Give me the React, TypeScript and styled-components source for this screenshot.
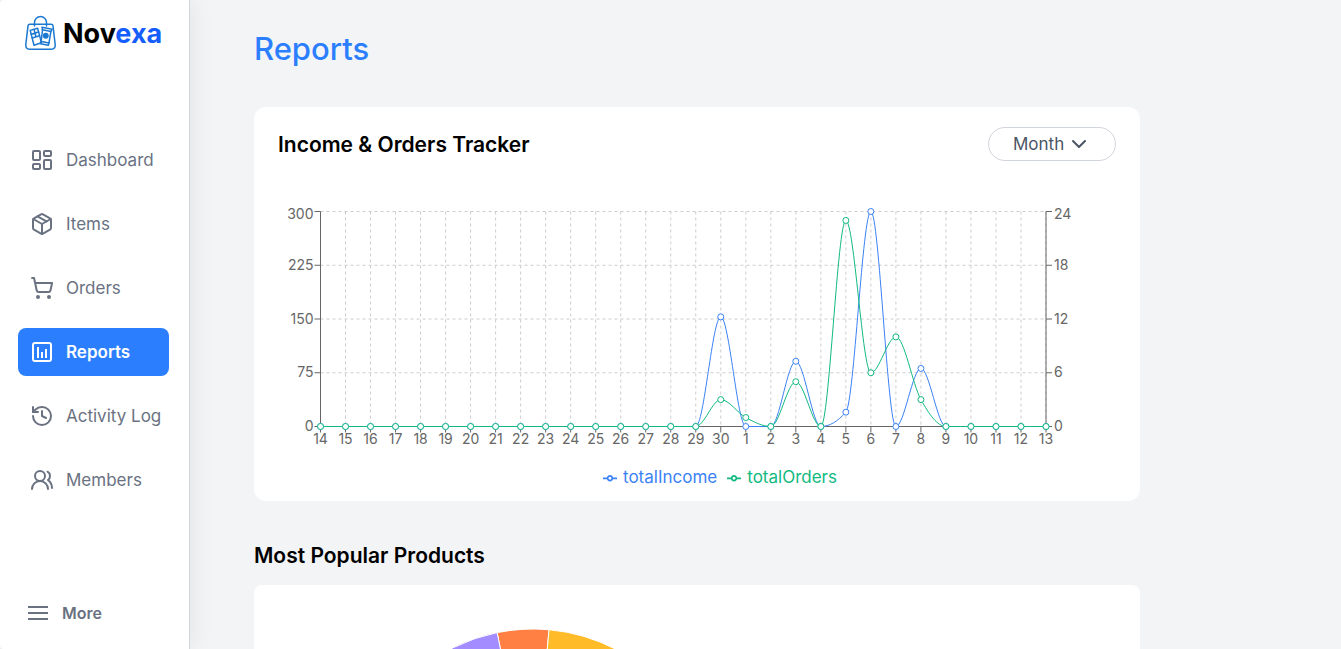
import React from "react";
import styled, { createGlobalStyle, css } from "styled-components";
import {
  LayoutDashboard,
  Package,
  ShoppingCart,
  History,
  UsersRound,
  ChevronDown,
} from "lucide-react";

const GlobalStyle = createGlobalStyle`
  *, *::before, *::after { box-sizing: border-box; }
  body {
    margin: 0;
    background: #f3f4f6;
    color: #000;
    font-family: Inter, "Liberation Sans", sans-serif;
    font-size: 17px;
    line-height: 24px;
  }
  h1, h2, ul { margin: 0; padding: 0; }
  ul { list-style: none; }
`;

const Layout = styled.div`
  display: flex;
  height: 100vh;
  overflow: hidden;
`;

const Sidebar = styled.aside`
  display: flex;
  flex-direction: column;
  flex: 0 0 190px;
  min-width: 0;
  padding: 14px 20px 24px 18px;
  background: #fff;
  border-right: 1px solid #d1d5dc;
  border-radius: 4px 0 0 4px;
  box-shadow: 0 0 24px rgba(0, 0, 0, 0.08);
`;

const Brand = styled.a`
  display: flex;
  align-items: center;
  gap: 5px;
  height: 38px;
  margin-bottom: 84px;
  padding-left: 6px;
  color: #000;
  font-size: 27px;
  font-weight: 700;
  line-height: 36px;
  text-decoration: none;
`;

const BrandName = styled.span`
  padding-top: 2px;
`;

const BrandAccent = styled.span`
  color: #155dfc;
`;

const NavList = styled.ul`
  display: flex;
  flex-direction: column;
  gap: 16px;
  flex: 1;
`;

const NavLink = styled.a<{ $active?: boolean }>`
  display: flex;
  align-items: center;
  gap: 12px;
  height: 48px;
  padding-left: 12px;
  border-radius: 8px;
  color: #6a7282;
  line-height: 22px;
  text-decoration: none;
  white-space: nowrap;
  ${(p) =>
    p.$active &&
    css`
      background: #2b7fff;
      color: #fff;
      font-weight: 600;
    `}
`;

const NavLabel = styled.span`
  padding-bottom: 1px;
`;

const MoreButton = styled.button`
  display: flex;
  align-items: center;
  gap: 12px;
  padding: 0 8px;
  border: 0;
  background: none;
  color: #6a7282;
  font: inherit;
  font-size: 16px;
  font-weight: 600;
  line-height: 22px;
  cursor: pointer;
`;

const Main = styled.main`
  flex: 1;
  min-width: 0;
  padding: 24px 64px;
  overflow-y: auto;
  scrollbar-width: none;
`;

const Content = styled.div`
  max-width: 886px;
`;

const PageTitle = styled.h1`
  margin-bottom: 33px;
  color: #2b7fff;
  font-size: 31px;
  font-weight: 500;
  line-height: 50px;
`;

const SectionTitle = styled.h2`
  padding-top: 2px;
  font-size: 21px;
  font-weight: 600;
  line-height: 26px;
`;

const Card = styled.section`
  padding: 20px 24px 12px;
  border-radius: 12px;
  background: #fff;
`;

const CardHeader = styled.div`
  display: flex;
  align-items: center;
  justify-content: space-between;
  margin-bottom: 40px;
`;

const RangePicker = styled.label`
  position: relative;
  display: block;
  width: 128px;
  color: #4a5565;
  svg {
    position: absolute;
    top: 5px;
    right: 25px;
    pointer-events: none;
  }
`;

const RangeSelect = styled.select`
  display: block;
  width: 100%;
  height: 34px;
  padding: 0 24px 1px;
  border: 1px solid #d1d5dc;
  border-radius: 17px;
  appearance: none;
  background: #fff;
  color: inherit;
  font: inherit;
`;

const ChartSvg = styled.svg`
  display: block;
  width: 100%;
  height: auto;
  overflow: visible;
  font-size: 14px;
`;

const Legend = styled.ul`
  display: flex;
  justify-content: center;
  gap: 10px;
  margin-top: 14px;
  padding-left: 46px;
`;

const LegendItem = styled.li<{ $color: string }>`
  display: flex;
  align-items: center;
  gap: 6px;
  color: ${(p) => p.$color};
`;

const Products = styled.div`
  display: flex;
  flex-direction: column;
  gap: 16px;
  margin-top: 40px;
`;

const ProductsCard = styled.section`
  padding: 24px;
  border-radius: 8px;
  background: #fff;
`;

const PieSvg = styled.svg`
  display: block;
  width: 100%;
  max-width: 510px;
`;

const BLUE = "#3b82f6";
const GREEN = "#10b981";

const days = [
  14, 15, 16, 17, 18, 19, 20, 21, 22, 23, 24, 25, 26, 27, 28, 29, 30, 1, 2, 3,
  4, 5, 6, 7, 8, 9, 10, 11, 12, 13,
];
const incomeByDay: Record<number, number> = { 30: 153, 3: 91, 5: 20, 6: 300, 8: 81 };
const ordersByDay: Record<number, number> = { 30: 3, 1: 1, 3: 5, 5: 23, 6: 6, 7: 10, 8: 3 };

const PLOT = { left: 42.5, right: 768, top: 10.5, bottom: 225.5 };
const stepX = (PLOT.right - PLOT.left) / (days.length - 1);
const xAt = (i: number) => PLOT.left + i * stepX;
const yAt = (ratio: number) => PLOT.bottom - ratio * (PLOT.bottom - PLOT.top);

type Point = [number, number];

const incomePoints: Point[] = days.map((d, i) => [xAt(i), yAt((incomeByDay[d] ?? 0) / 300)]);
const orderPoints: Point[] = days.map((d, i) => [xAt(i), yAt((ordersByDay[d] ?? 0) / 24)]);

/* Monotone cubic interpolation, so the curve never dips below the axis. */
function monotonePath(points: Point[]): string {
  const slopes = points.slice(1).map((p, i) => (p[1] - points[i][1]) / (p[0] - points[i][0]));
  const tangents = points.map((_, i) => {
    if (i === 0) return slopes[0];
    if (i === points.length - 1) return slopes[i - 1];
    const a = slopes[i - 1];
    const b = slopes[i];
    if (a * b <= 0) return 0;
    return Math.sign(a) * 2 * Math.min(Math.abs(a), Math.abs(b), Math.abs(a + b) / 4);
  });
  let d = `M${points[0][0]},${points[0][1]}`;
  for (let i = 1; i < points.length; i++) {
    const [x0, y0] = points[i - 1];
    const [x1, y1] = points[i];
    const dx = (x1 - x0) / 3;
    d += `C${x0 + dx},${y0 + dx * tangents[i - 1]},${x1 - dx},${y1 - dx * tangents[i]},${x1},${y1}`;
  }
  return d;
}

function Series({ points, color }: { points: Point[]; color: string }) {
  return (
    <g stroke={color}>
      <path d={monotonePath(points)} fill="none" />
      {points.map(([x, y], i) => (
        <circle key={i} cx={x} cy={y} r="3" fill="#fff" />
      ))}
    </g>
  );
}

function TrackerChart() {
  const quarters = [0, 1, 2, 3, 4];
  return (
    <ChartSvg viewBox="0 0 838 250" role="img" aria-label="Income and orders per day">
      <g stroke="#ccc" strokeDasharray="3 3">
        {quarters.map((q) => (
          <line key={q} x1={PLOT.left} x2={PLOT.right} y1={yAt(q / 4)} y2={yAt(q / 4)} />
        ))}
        {days.map((d, i) => (
          <line key={d} x1={xAt(i)} x2={xAt(i)} y1={PLOT.top} y2={PLOT.bottom} />
        ))}
      </g>
      <g stroke="#666">
        <line x1={PLOT.left} x2={PLOT.right} y1={PLOT.bottom} y2={PLOT.bottom} />
        <line x1={PLOT.left} x2={PLOT.left} y1={PLOT.top} y2={PLOT.bottom} />
        <line x1={PLOT.right} x2={PLOT.right} y1={PLOT.top} y2={PLOT.bottom} />
        {quarters.map((q) => (
          <React.Fragment key={q}>
            <line x1={PLOT.left - 6} x2={PLOT.left} y1={yAt(q / 4)} y2={yAt(q / 4)} />
            <line x1={PLOT.right} x2={PLOT.right + 6} y1={yAt(q / 4)} y2={yAt(q / 4)} />
          </React.Fragment>
        ))}
        {days.map((d, i) => (
          <line key={d} x1={xAt(i)} x2={xAt(i)} y1={PLOT.bottom} y2={PLOT.bottom + 6} />
        ))}
      </g>
      <g fill="#666">
        {quarters.map((q) => {
          /* The top label is kept inside the plot's upper edge. */
          const y = Math.max(18, Math.floor(yAt(q / 4)) + 5);
          return (
            <React.Fragment key={q}>
              <text x={PLOT.left - 7} y={y} textAnchor="end">
                {q * 75}
              </text>
              <text x={PLOT.right + 8} y={y}>
                {q * 6}
              </text>
            </React.Fragment>
          );
        })}
        {days.map((d, i) => (
          <text key={d} x={xAt(i)} y="243" textAnchor="middle">
            {d}
          </text>
        ))}
      </g>
      <Series points={incomePoints} color={BLUE} />
      <Series points={orderPoints} color={GREEN} />
    </ChartSvg>
  );
}

function LegendMark() {
  return (
    <svg width="14" height="14" viewBox="0 0 32 32" fill="none" stroke="currentColor" strokeWidth="4" aria-hidden="true">
      <path d="M0,19h10.67A5.33,5.33,0,1,1,21.33,19H32M21.33,19A5.33,5.33,0,1,1,10.67,19" />
    </svg>
  );
}

const slices = [
  { from: -11.5, to: 5.1, color: "#ff8042" },
  { from: 5.1, to: 96, color: "#ffbb28" },
  { from: 96, to: 190, color: "#00c49f" },
  { from: 190, to: 290, color: "#0088fe" },
  { from: 290, to: 348.5, color: "#a28cff" },
];

function slicePath(from: number, to: number): string {
  const at = (deg: number) => {
    const a = (deg * Math.PI) / 180;
    return `${255 + 180 * Math.sin(a)},${200 - 180 * Math.cos(a)}`;
  };
  return `M255,200L${at(from)}A180,180,0,0,1,${at(to)}Z`;
}

function ProductsPie() {
  return (
    <PieSvg viewBox="0 0 510 400" role="img" aria-label="Share of each product">
      {slices.map((s) => (
        <path key={s.color} d={slicePath(s.from, s.to)} fill={s.color} stroke="#fff" />
      ))}
    </PieSvg>
  );
}

function BagLogo() {
  return (
    <svg width="34" height="36" viewBox="0 0 34 36" fill="none" stroke="#1c78d0" strokeWidth="1.5" strokeLinejoin="round" strokeLinecap="round" aria-hidden="true">
      <path d="M5.8 9.2H27.2Q28.8 9.2 29 10.8L31.2 29.5Q31.5 34.2 27.4 34.2H5.6Q1.5 34.2 1.8 29.5L4 10.8Q4.2 9.2 5.8 9.2Z" />
      <path d="M10.5 11V7.4A6 6 0 0 1 22.5 7.4V11" />
      <path d="M6.2 15.4L13.6 13.2L15.6 20.6L17.4 27.8L10 30.2Z" />
      <path d="M7.2 19.2L14.6 17M8.2 23L15.6 20.8M10 14.4L12 21.8" />
      <path d="M18 12.2L28.2 14.2L26.9 16.4L24.9 28.4L24.3 30.3L16.6 28.8L17.2 26.3L18.5 15Z" />
      <path d="M18.6 14.8L26.9 16.4M17.4 26.6L25 28" />
      <circle cx="21.8" cy="20.8" r="2.2" fill="#1c78d0" />
    </svg>
  );
}

function ReportsIcon() {
  return (
    <svg width="24" height="24" viewBox="0 0 24 24" fill="none" stroke="currentColor" strokeWidth="2" aria-hidden="true">
      <rect x="3" y="3" width="18" height="18" rx="2" />
      <path d="M8 7V18M12 12V18M16 9V18" />
    </svg>
  );
}

function MenuIcon() {
  return (
    <svg width="24" height="24" viewBox="0 0 24 24" fill="none" stroke="currentColor" strokeWidth="2" aria-hidden="true">
      <path d="M2 6H22M2 12H22M2 18H22" />
    </svg>
  );
}

const navItems = [
  { label: "Dashboard", icon: <LayoutDashboard /> },
  { label: "Items", icon: <Package /> },
  { label: "Orders", icon: <ShoppingCart /> },
  { label: "Reports", icon: <ReportsIcon />, active: true },
  { label: "Activity Log", icon: <History /> },
  { label: "Members", icon: <UsersRound /> },
];

export default function App() {
  return (
    <>
      <GlobalStyle />
      <Layout>
        <Sidebar>
          <Brand href="#">
            <BagLogo />
            <BrandName>
              Nov<BrandAccent>exa</BrandAccent>
            </BrandName>
          </Brand>
          <NavList>
            {navItems.map((item) => (
              <li key={item.label}>
                <NavLink href="#" $active={item.active} aria-current={item.active ? "page" : undefined}>
                  {item.icon}
                  <NavLabel>{item.label}</NavLabel>
                </NavLink>
              </li>
            ))}
          </NavList>
          <MoreButton type="button">
            <MenuIcon />
            <NavLabel>More</NavLabel>
          </MoreButton>
        </Sidebar>
        <Main>
          <Content>
            <PageTitle>Reports</PageTitle>
            <Card>
              <CardHeader>
                <SectionTitle>Income &amp; Orders Tracker</SectionTitle>
                <RangePicker>
                  <RangeSelect aria-label="Range" defaultValue="Month">
                    <option>Week</option>
                    <option>Month</option>
                    <option>Year</option>
                  </RangeSelect>
                  <ChevronDown />
                </RangePicker>
              </CardHeader>
              <TrackerChart />
              <Legend>
                <LegendItem $color={BLUE}>
                  <LegendMark />
                  totalIncome
                </LegendItem>
                <LegendItem $color={GREEN}>
                  <LegendMark />
                  totalOrders
                </LegendItem>
              </Legend>
            </Card>
            <Products>
              <SectionTitle>Most Popular Products</SectionTitle>
              <ProductsCard>
                <ProductsPie />
              </ProductsCard>
            </Products>
          </Content>
        </Main>
      </Layout>
    </>
  );
}
